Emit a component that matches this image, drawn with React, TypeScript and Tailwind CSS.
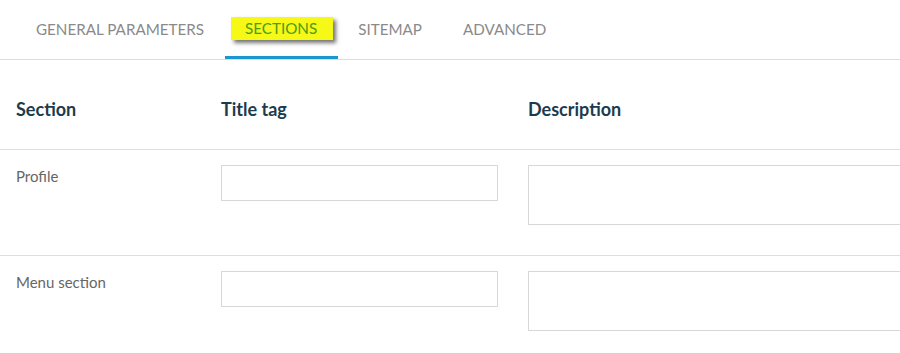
const tabs = ['GENERAL PARAMETERS', 'SECTIONS', 'SITEMAP', 'ADVANCED'];

const rows = ['Profile', 'Menu section'];

export default function App() {
  return (
    <div className="w-[900px] h-[353px] overflow-hidden bg-white font-['Lato',sans-serif]">
      <div className="flex px-4 border-b border-[#dcdcdc]">
        {tabs.map((tab) => {
          const active = tab === 'SECTIONS';
          return (
            <div
              key={tab}
              className={`pl-5 pr-[21px] h-[59px] flex items-center text-[15.2px] ${
                active ? 'border-b-[3px] border-[#1a97d3] pt-[3px]' : 'text-[#8a8a8a]'
              }`}
            >
              {active ? (
                <span className="-ml-[14px] -mr-[16px] pl-[14px] pr-[16px] mb-[3px] bg-[#f6f916] text-[#4e9a1c] leading-[23px] shadow-[3px_3px_4px_rgba(0,0,0,0.55)]">
                  {tab}
                </span>
              ) : (
                tab
              )}
            </div>
          );
        })}
      </div>

      <div className="grid grid-cols-[205px_307px_1fr] px-4 pt-[36px] pb-[26px] border-b border-[#dedede] text-[18px] leading-[27px] font-bold text-[#1d3b4e]">
        <div>Section</div>
        <div>Title tag</div>
        <div>Description</div>
      </div>

      {rows.map((row) => (
        <div
          key={row}
          className="grid grid-cols-[205px_307px_1fr] px-4 pt-[15px] pb-[30px] border-b border-[#dedede]"
        >
          <div className="text-[15px] leading-[22px] text-[#666]">{row}</div>
          <div>
            <input className="w-[277px] h-[36px] border border-[#d8d8d8] bg-white" />
          </div>
          <div>
            <textarea className="block w-[420px] h-[60px] border border-[#d8d8d8] bg-white resize-none" />
          </div>
        </div>
      ))}
    </div>
  );
}
